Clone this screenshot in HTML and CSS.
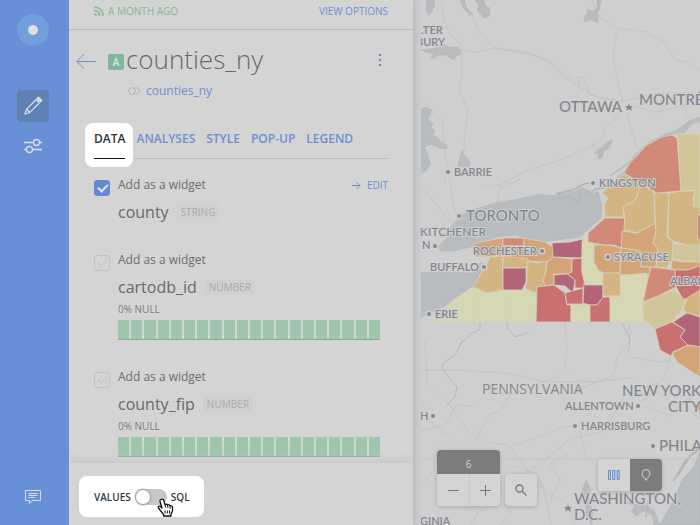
FILE: index.html
```
<!DOCTYPE html>
<html lang="en">
<head>
<meta charset="utf-8">
<meta name="viewport" content="width=device-width, initial-scale=1">
<title>counties_ny</title>
<link rel="stylesheet" href="styles.css">
</head>
<body>
<div class="app">
  <nav class="rail" aria-label="Main">
    <a class="rail-logo" href="#" aria-label="Home"><span class="dot"></span></a>
    <button class="rail-btn rail-btn-on" aria-label="Edit">
      <svg width="20" height="20" viewBox="0 0 20 20" fill="none" stroke="currentColor" stroke-width="1.3" stroke-linejoin="round"><path d="M2 18l1.400-4.600L13 3.800l3.200 3.200-9.600 9.600zM4 13.500l2.700 2.700"/><path d="M14 2.600l1.500-1.400 3.300 3.300-1.400 1.400z" fill="currentColor"/></svg>
    </button>
    <button class="rail-btn" aria-label="Settings">
      <svg width="20" height="20" viewBox="0 0 20 20" fill="none" stroke="currentColor" stroke-width="1.300"><path d="M1 6.500h9.500M16.500 6.500H19M1 13.500h2.500M9.500 13.500H19"/><circle cx="13.500" cy="6.500" r="3"/><circle cx="6.500" cy="13.500" r="3"/></svg>
    </button>
    <button class="rail-btn rail-chat" aria-label="Feedback">
      <svg width="18" height="16" viewBox="0 0 18 16" fill="none" stroke="currentColor"><path d="M1.500 1.500h15v10h-8.500l-2.500 3v-3h-4zM4.500 4.500h9M4.500 6.500h9M4.500 8.500h6"/></svg>
    </button>
  </nav>

  <section class="panel">
    <header class="topbar">
      <span class="ago"><svg width="10" height="10" viewBox="0 0 10 10" fill="none" stroke="currentColor" stroke-width="1.600"><path d="M0 1a8.500 8.500 0 0 1 9 9M0 4.500a5 5 0 0 1 5.500 5.500"/><circle cx="1.500" cy="8.500" r="1.300" fill="currentColor" stroke="none"/></svg>A MONTH AGO</span>
      <a href="#">VIEW OPTIONS</a>
    </header>

    <div class="title-row">
      <button class="back" aria-label="Back"><svg width="20" height="16" viewBox="0 0 20 16" fill="none" stroke="currentColor"><path d="M20 8.500H1M8 1L.8 8.500 8 15.500"/></svg></button>
      <span class="badge">A</span>
      <h1>counties_ny</h1>
      <button class="more" aria-label="More options"><i></i><i></i><i></i></button>
    </div>
    <div class="source">
      <svg width="12" height="8" viewBox="0 0 12 8" fill="none" stroke="currentColor"><circle cx="4" cy="4" r="3.300"/><path d="M6.500 1.200a3.300 3.300 0 1 1 0 5.600"/></svg>
      <a href="#">counties_ny</a>
    </div>

    <div class="tabs" role="tablist">
      <button class="tab tab-on" role="tab" aria-selected="true">DATA</button>
      <button class="tab" role="tab">ANALYSES</button>
      <button class="tab" role="tab">STYLE</button>
      <button class="tab" role="tab">POP-UP</button>
      <button class="tab" role="tab">LEGEND</button>
    </div>

    <div class="columns">
      <article class="column">
        <input type="checkbox" id="w1" checked>
        <div class="column-body">
          <div class="widget-row"><label for="w1">Add as a widget</label><a href="#"><svg width="9" height="9" viewBox="0 0 9 9" fill="none" stroke="currentColor"><path d="M0 4.500h8M4.500 1l3.500 3.500L4.500 8"/></svg>EDIT</a></div>
          <div class="name-row"><h2>county</h2><span class="tag">STRING</span></div>
        </div>
      </article>
      <article class="column">
        <input type="checkbox" id="w2">
        <div class="column-body">
          <div class="widget-row"><label for="w2">Add as a widget</label></div>
          <div class="name-row"><h2>cartodb_id</h2><span class="tag">NUMBER</span></div>
          <p class="nulls">0% NULL</p>
          <div class="histogram"><i></i><i></i><i></i><i></i><i></i><i></i><i></i><i></i><i></i><i></i><i></i><i></i><i></i><i></i><i></i><i></i><i></i><i></i><i></i><i></i></div>
        </div>
      </article>
      <article class="column">
        <input type="checkbox" id="w3">
        <div class="column-body">
          <div class="widget-row"><label for="w3">Add as a widget</label></div>
          <div class="name-row"><h2>county_fip</h2><span class="tag">NUMBER</span></div>
          <p class="nulls">0% NULL</p>
          <div class="histogram"><i></i><i></i><i></i><i></i><i></i><i></i><i></i><i></i><i></i><i></i><i></i><i></i><i></i><i></i><i></i><i></i><i></i><i></i><i></i><i></i></div>
        </div>
      </article>
    </div>

    <footer class="footer">
      <div class="mode">
        <label for="mode">VALUES</label>
        <input type="checkbox" id="mode" class="switch">
        <label for="mode">SQL</label>
        <svg class="cursor" width="17" height="20" viewBox="0 0 17 20"><path d="M4 1.500c1.500-.8 2.500 0 2.800 1L8 6.500c1-.7 2-.5 2.500.5 1-.6 2-.3 2.500.7 1.500-.4 2.500.4 2.500 1.800v3.500l-1.500 3V18H6.500v-1.500L1.500 10c-.8-1.300.8-2.500 2-1.500L5 10 3 3.500C2.800 2.500 3.200 1.800 4 1.500z" fill="#fff" stroke="#111" stroke-width="1.300" stroke-linejoin="round"/><path d="M8 6.500l.7 3M10.500 7l.5 3M13 8l.2 2.500M8 12.500v3M10.300 12.500v3M12.500 12.500v3" stroke="#111" fill="none"/></svg>
      </div>
    </footer>
  </section>

  <main class="map">
    <svg class="map-canvas" viewBox="421 0 279 525" preserveAspectRatio="xMinYMin slice" role="img" aria-label="Map of New York counties">
      <g class="water">
        <path d="M427 0h7l1 4-3 8-4 3-2-5zM460 0h4l3 8 6 6-3 1-6-6zM475 0h9l1 6 5 2-1 8-5 2-7-8 2-4zM421 50l15-2 6-4 8 3 8 0 4 7-6 2-2 4-8-5-8 0-5 4-2-1 3-5-5 0z"/>
        <path d="M421 109l4-2 6 3-1 6-3 3 6 4-2 4 4 4-2 4 5 3 3 4 6 3 0 4-8-1-7-4-8 3 4 7 2 10-4 7-6 2-4-4zM462 150l2 5 6 7-1 5-11-1 2-9zM597 0h3l1 0-1 4 0 5-3 3 1 11-7-3-7 2 0-4 4-5-1-4 5 2 5-2zM613 140l-4 8-5 3-2 7-4 1 0-6-4 1 3-4 6-3 4-5z"/>
        <path d="M700 117l-11 4-6 5-8 5-9 3-17 8-14 13-11 17-8 6 10-3 9-21 17-13 20-7 12-1 8-9 8-3z"/>
        <path d="M438 247l9-9 4-12 10-11 14-6 20-6 24-4 21-5 18 2-2-3 7-1 5 4-1-6 7 2 8-4 8 3-1 5 9-5 2 8 2 6-1 13-15 13-6 6-32 4-9 2-23-8-20 2-25 10-18 4-12 0zM421 273l22-1 30 1 8-11 4 2-12 23-30 20-22 10z"/>
        <path d="M700 452l-7 16-11 12-8 20-11 19-3 6h40z"/>
        <path d="M654 525l-2-10-9-4-6 5-6-5 4-5-11-4 22 4 8 4 6 15zM586 480l5 10-3 12 5 8-1 15-5-9-2-16-4-7z"/>
      </g>
      <g class="shore"><path d="M560 198l12-2 6 7 3-8 9-1 5-5 10-1M557 194l18-5 9-5 13-2M610 176l20-14 18-16 20-11M646 517l3-20M700 449l-10 7-9 15-8 10M676 477l7-13 17-18"/></g>
      <g class="roads">
        <path d="M441 0l3 20 5 13 9 8 4 10 0 25-3 12 9 23-3 25-3 32M462 50l15 2 17-4 35 6 18 7 13 13 17 12 22 12 23 3M472 15l6 15 16 18 31 4 23 8 17 14 15 12-2-10 6 2 6 17 20 4M592 0l8 18 17 10 29 4 18 10 11 18 13 2 12 9M617 29l-4 28 5 27 5 19 15 47M623 104l-9 16-9 8-4 13-35 17-40 13-27 14-16 1M623 101l35-8 42 0M630 105l25 7 29-6 16-7M421 99l12 13 10 10 1 30 4 13-4 18M421 186l20 25 10 11M449 175l5 32 5 12M497 202l3-14 20-9M684 105l3 11 13 8"/>
        <path d="M421 370h33l52 3 40 9 49 0 40-5M565 322l2 26-2 20 12 12 20 2M629 323l1 17-12 17-5 19-29 11-21-2M632 357l27 5 12-2-8 20-39 16-20 35-34 8-20 17-29 20M425 340l2 43 21 20 22 30 15 9 23 3 27 34M475 441l15-27 10-2 10-17 20-8 30-12M421 431l25-6 10-20 20 1M513 445l24-7 23-10 18-3 15-16 19-7 20 4 15-8 12-8M421 459h279M421 486l13-16M510 465l26 8 9 18 22 12 8 22M471 525l7-13 12-6M700 393l-22 12-20-12-21-1M578 425l8 30 20 23 26 12M645 406l26 10 17-7 12 10M421 400l8 20 20 16M500 525l10-12-6-8 19-16 20-3 8 39M550 500l10-20-10-16 18-10"/>
      </g>
      <g class="rivers"><path d="M463 340l-8 15-12 8-1 5 8 11 7 8-2 10-10 10M480 322v8l-10 4-11 12M507 322l0 5 8 10 14-5M622 323l8 16-2 14"/></g>

      <g class="counties">
        <path class="c1" d="M434 322l19-22 20-13 5 3 9 3 16-3h34v32z"/><path class="line" d="M475 290v32M509 290v32"/>
        <path class="c3" d="M473 287l12-20 5-10 13-1v34l-16 3z"/>
        <path class="c4" d="M473 245l7-3 23-4v18l-28 1 2-6z"/>
        <path class="c5" d="M503 238h21v8h-21z"/>
        <path class="c4" d="M503 246h21v-8l21 4 8 5v11l-7 4-18-1v7h-25z"/>
        <path class="c3" d="M503 256l25 3v9h-25zM527 261l10 2 10-2-2 13 0 10-3 8h-10l-7-4 2-7z"/>
        <path class="c7" d="M503 268h23v14l-4 8h-19z"/>
        <path class="c4" d="M547 262l6-5 19 2v18l-5-3h-13v11l-9 1-2-6 3-9z"/>
        <path class="c7" d="M552 243l18-1 13-3-1 19-29-1z"/>
        <path class="c6" d="M572 259l10-1v12l3 13-1 5h-9v-8l-8-6 5-2z"/>
        <path class="c6" d="M537 287l17-2 11 8 2 12h4v17h-35z"/>
        <path class="c7" d="M554 275l13-1 8 6-2 13-8-7-11-1z"/>
        <path class="c6" d="M565 293l18-5v16h-16z"/>
        <path class="c7" d="M584 283h19v15l-6 7h-8l-6-2z"/>
        <path class="c1" d="M571 305h19v17h-19zM585 234l3 8 6 3v17l4 8 5 3v12h-18l-3-13v-30z"/>
        <path class="c6" d="M590 305h7l6-8h7l1 25h-21z"/>
        <path class="c5" d="M588 233l9-8 8-7h20l-1 13-3 17-7-3-11 0-15-3z"/>
        <path class="c4" d="M594 245h9l11 1 7 2-1 25h-17l-5-3-4-8zM622 231l15 2 18-10 1 10-3 9 5 8-2 17-15 0-1-16-19-3z"/>
        <path class="c4" d="M621 248l19 3 1 16h9v7l-30 1z"/>
        <path class="c3" d="M603 273h17l1 23h-18zM602 193l22-19 16 9-3 14-4 5-10 5 1 10h-19l-1-12 4-7z"/>
        <path class="c3" d="M640 183l14 9 1 31-18 10-13-3 1-13-2-10 10-5 4-5z"/>
        <path class="c3" d="M654 193l15 0-2 44 6 5-1 18-6 8-10-1 2-17-5-8 3-9z"/>
        <path class="c3" d="M669 193l12-2h14l-2 9 7 8v38l-13-1-14-4-5-4z"/>
        <path class="c1" d="M621 276l25-3 1 10-4 20v19h-33v-26h10z"/>
        <path class="c2" d="M677 134h23v74l-7-2 2-16-14 1zM673 244l14 1h13v17h-17l-11-5zM643 303l17-8 13-5 14 8-5 12-10 12-17 7-12-11z"/>
        <path class="c7" d="M698 215h2v24h-2z"/>
        <path class="c4" d="M672 260l11 2h17v12l-12-4-13 0-4-2z"/>
        <path class="c5" d="M624 173l6-10 17-18 15-8 10-2 5 3 4 53-24 2-17-10zM651 267l24 3 1 17-16 8-17 7 4-19z"/>
        <path class="c6" d="M675 270l13 0 12-4v26l-5 6-12 1-7-12z"/>
        <path class="c3" d="M687 298l13-8v26l-13-3-4-3z"/>
        <path class="c7" d="M673 322l14-9 13 4v30l-12-2-8-8 5-7z"/>
        <path class="c6" d="M655 329l17-7 13 8-5 7 8 8-15 7-2 4-11-6-3-13z"/>
        <path class="c4" d="M672 353l16-8 12 2v26l-3 2-20-13z"/>
        <path class="c5" d="M697 374l3-5v8zM697 407l3-3v9z"/>
      </g>

      <g class="stops">
        <circle cx="448" cy="172" r="2"/><circle cx="459" cy="216" r="2"/><circle cx="435" cy="246" r="2"/><circle cx="484" cy="267" r="2"/><circle cx="429" cy="314" r="2"/><circle cx="542" cy="251" r="2"/><circle cx="608" cy="257" r="2"/><circle cx="593" cy="183" r="2"/><circle cx="433" cy="416" r="2"/><circle cx="638" cy="406" r="2"/><circle cx="575" cy="426" r="2"/><circle cx="653" cy="446" r="2"/>
        <path d="M629 103l1 3h3l-2 2 1 3-3-2-3 2 1-3-2-2h3zM568 504l1 3h3l-2 2 1 3-3-2-3 2 1-3-2-2h3z"/>
      </g>
      <g class="labels">
        <text x="421" y="34">.TER</text><text x="416" y="46">BURY</text>
        <text x="454" y="176">BARRIE</text>
        <text class="city" x="466" y="221">TORONTO</text>
        <text class="mid" x="420" y="236">KITCHENER</text><text x="422" y="249">N</text>
        <text x="473" y="255">ROCHESTER</text>
        <text x="430" y="271">BUFFALO</text><text x="435" y="318">ERIE</text>
        <text x="599" y="187">KINGSTON</text><text x="614" y="261">SYRACUSE</text>
        <text x="670" y="285">ALBANY</text>
        <text class="city" x="559" y="112">OTTAWA</text><text class="city" x="639" y="105">MONTRÉAL</text>
        <text class="state" x="482" y="394">PENNSYLVANIA</text>
        <text class="city" x="622" y="396">NEW YORK</text><text class="city" x="668" y="412">CITY</text>
        <text x="565" y="410">ALLENTOWN</text><text x="581" y="430">HARRISBURG</text>
        <text class="city" x="659" y="451">PHILADELPHIA</text>
        <text x="420" y="420">H</text>
        <text class="city" x="574" y="504">WASHINGTON,</text><text class="city" x="574" y="520">D.C.</text>
        <text x="420" y="525">GINIA</text>
      </g>
    </svg>

    <div class="zoom">
      <div class="zoom-box">
        <output class="zoom-level">6</output>
        <div class="zoom-buttons">
          <button aria-label="Zoom out"><svg width="11" height="11" viewBox="0 0 11 11" stroke="currentColor"><path d="M0 5.500h11"/></svg></button>
          <button aria-label="Zoom in"><svg width="11" height="11" viewBox="0 0 11 11" stroke="currentColor"><path d="M0 5.500h11M5.500 0v11"/></svg></button>
        </div>
      </div>
      <button class="search" aria-label="Search"><svg width="12" height="12" viewBox="0 0 12 12" fill="none" stroke="currentColor" stroke-width="1.300"><circle cx="4.500" cy="4.500" r="3.500"/><path d="M7 7l4.500 4.500"/></svg></button>
    </div>
    <div class="view">
      <button class="view-widgets" aria-label="Widgets"><svg width="12" height="12" viewBox="0 0 12 12" fill="none" stroke="currentColor"><path d="M.5 1.500h2v9h-2zM4.800 1.500h2v9h-2zM9.200 1.500h2v9h-2z"/></svg></button>
      <button class="view-map" aria-label="Map"><svg width="10" height="12" viewBox="0 0 10 12" fill="none" stroke="currentColor"><path d="M5 11.300C4.300 9.200 1 7.300 1 4.600a4 4 0 0 1 8 0C9 7.300 5.700 9.200 5 11.300z"/></svg></button>
    </div>
  </main>
</div>
</body>
</html>
```
FILE: styles.css
```
* { box-sizing: border-box; }
body { margin: 0; font: 12px/16px "Open Sans", sans-serif; color: #6a6e71; }
button { padding: 0; border: 0; background: none; font: inherit; color: inherit; }
a { color: #6d91cf; text-decoration: none; }
h1, h2, p { margin: 0; font-weight: 400; }
svg { display: block; }

.app { display: flex; height: 100vh; overflow: hidden; background: #d4d4d4; }

.rail { position: relative; z-index: 2; flex: 0 0 69px; display: flex; flex-direction: column; align-items: center; padding: 14px 3px 12px 0; background: #6790d6; color: #d5deed; }
.rail-logo { display: grid; place-items: center; width: 32px; height: 32px; margin-bottom: 44px; border-radius: 50%; background: #729edb; }
.dot { width: 10px; height: 10px; border-radius: 50%; background: #dedfe0; }
.rail-btn { display: grid; place-items: center; width: 32px; height: 32px; margin-bottom: 8px; border-radius: 4px; }
.rail-btn-on { background: #5f81b4; }
.rail-chat { margin: auto 0 0; }

.panel { position: relative; z-index: 1; flex: 0 0 344px; display: flex; flex-direction: column; background: #d4d4d4; box-shadow: 0 0 6px #a8acb2; }
.topbar { display: flex; justify-content: space-between; align-items: center; height: 30px; padding: 0 25px 8px; border-bottom: 1px solid #b9bcbe; font-size: 10px; }
.ago { display: flex; align-items: center; gap: 4px; color: #83b994; }

.title-row { display: flex; align-items: center; height: 36px; margin-top: 11px; padding: 0 25px 0 7px; }
.back { margin: 4px 12px 0 0; color: #6d91cf; }
.badge { width: 16px; height: 16px; margin: 6px 2px 0 0; border-radius: 2px; background: #7fb69e; color: #dce5e0; font-size: 10px; font-weight: 600; text-align: center; }
h1 { font-size: 26px; line-height: 36px; font-weight: 300; color: #666a6d; }
.more { display: grid; gap: 3px; margin: 2px 0 0 auto; padding: 0 7px; }
.more i { width: 2px; height: 2px; background: #6486c0; }
.source { display: flex; align-items: center; gap: 6px; height: 28px; padding-left: 59px; color: #b0b2b4; }

.tabs { display: flex; align-items: flex-start; gap: 11px; height: 30px; margin: 24px 25px 0; border-bottom: 1px solid #bcbfc1; }
.tab { position: relative; height: 30px; padding-bottom: 11px; color: #6d91cf; font-weight: 600; line-height: 18px; }
.tab-on { z-index: 0; color: #2e3336; }
.tab-on::before { content: ""; position: absolute; z-index: -1; inset: -6px -8px -8px -9px; border-radius: 8px; background: #fff; }
.tab-on::after { content: ""; position: absolute; inset: auto 0 0 0; height: 1px; background: #111; }

.columns { flex: 1; min-height: 0; overflow: hidden; display: flex; flex-direction: column; gap: 28px; padding: 17px 25px 0; }
.column { display: flex; gap: 8px; flex: none; }
.column input { flex: none; appearance: none; width: 16px; height: 16px; margin: 4px 0 0; border: 1px solid #c1c3c4; border-radius: 3px; }
.column input::after { content: ""; display: block; width: 8px; height: 4px; margin: 3px; border: solid #c3c5c6; border-width: 0 0 1px 1px; transform: rotate(-45deg); }
.column input:checked { border-color: #6389d2; background: #6389d2; }
.column input:checked::after { border-color: #e3e7ee; border-width: 0 0 2px 2px; }
.column-body { flex: 1; }
.widget-row { display: flex; justify-content: space-between; height: 18px; line-height: 18px; }
.widget-row a { display: flex; align-items: center; gap: 6px; font-size: 10px; }
.name-row { display: flex; align-items: center; gap: 8px; height: 23px; margin-top: 6px; }
h2 { font-size: 16px; line-height: 22px; color: #666a6d; }
.tag { padding: 0 4px; border-radius: 3px; background: #d0d0d0; color: #a9abad; font-size: 10px; line-height: 16px; }
.nulls { height: 14px; margin-top: 4px; color: #7b7e81; font-size: 10px; line-height: 14px; }
.histogram { display: flex; gap: 2px; height: 20px; margin: 4px 8px 0 0; background: #cbd9cf; border-bottom: 1px solid #87ac93; }
.histogram i { flex: 1; background: #9fc6ac; }

.footer { flex: none; height: 62px; padding: 13px 10px 0; box-shadow: 0 -2px 10px #c4c4c4; clip-path: inset(-12px 0 0 0); }
.mode { position: relative; display: inline-flex; align-items: center; gap: 4px; height: 41px; padding: 0 14px 0 15px; border-radius: 8px; background: #fff; color: #2e3c43; font-size: 10px; font-weight: 600; }
.switch { appearance: none; width: 32px; height: 16px; margin: 0; border-radius: 8px; background: #c5c8ca; }
.switch::before { content: ""; display: block; width: 14px; height: 14px; margin: 1px; border-radius: 50%; background: #fff; box-shadow: 0 0 2px 1px #999; }
.cursor { position: absolute; left: 78px; top: 22px; }

.map { position: relative; flex: 1; min-width: 0; padding-left: 8px; background: #cacbce; }
.map-canvas { width: 100%; height: 100%; background: #cfcfcf; }
.water { fill: #b9bcbf; stroke: #b1b3b6; stroke-width: .5; }
.shore, .roads, .rivers { fill: none; }
.shore { stroke: #b2b5b7; stroke-width: 1.5; }
.roads { stroke: #c1bebf; stroke-width: .7; }
.rivers { stroke: #a9b4bd; stroke-width: .8; }
.counties { stroke: #d9d1bd; stroke-width: .8; }
.c1 { fill: #d5d8b2; } .c2 { fill: #d1c59a; } .c3 { fill: #d2b583; } .c4 { fill: #d3a478; }
.c5 { fill: #d18978; } .c6 { fill: #c97073; } .c7 { fill: #b26478; }
.line { fill: none; }
.stops { fill: #85898f; stroke: #d0d0d0; stroke-width: 3; paint-order: stroke; }
.labels { font: 600 11px Lato, sans-serif; fill: #83878d; stroke: #d0d0d0; stroke-width: 2; stroke-linejoin: round; paint-order: stroke; }
.labels .city { font-size: 15px; font-weight: 500; }
.labels .mid { font-size: 12px; font-weight: 500; }
.labels .state { font: 400 14px "Open Sans", sans-serif; }

.zoom { position: absolute; left: 24px; bottom: 19px; display: flex; align-items: flex-end; gap: 5px; }
.zoom-box { border-radius: 4px; overflow: hidden; box-shadow: 0 1px 4px #a8a8a8; background: #d4d4d4; }
.zoom-level { display: block; height: 24px; background: #7c7c7c; color: #d6d6d6; font-size: 10px; line-height: 28px; text-align: center; }
.zoom-buttons { display: flex; }
.zoom-buttons button { display: grid; place-items: center; width: 32px; height: 32px; color: #777; }
.zoom-buttons button + button { width: 31px; border-left: 1px solid #cacaca; }
.search { display: grid; place-items: center; width: 32px; height: 32px; border-radius: 4px; background: #d4d4d4; color: #777; box-shadow: 0 1px 4px #a8a8a8; }
.view { position: absolute; right: 38px; bottom: 34px; display: flex; border-radius: 4px; overflow: hidden; box-shadow: 0 1px 4px #a8a8a8; }
.view button { display: grid; place-items: center; width: 32px; height: 32px; }
.view-widgets { background: #d4d4d4; color: #6389d2; }
.view .view-map { background: #7c7c7c; color: #d6d6d6; }
```
